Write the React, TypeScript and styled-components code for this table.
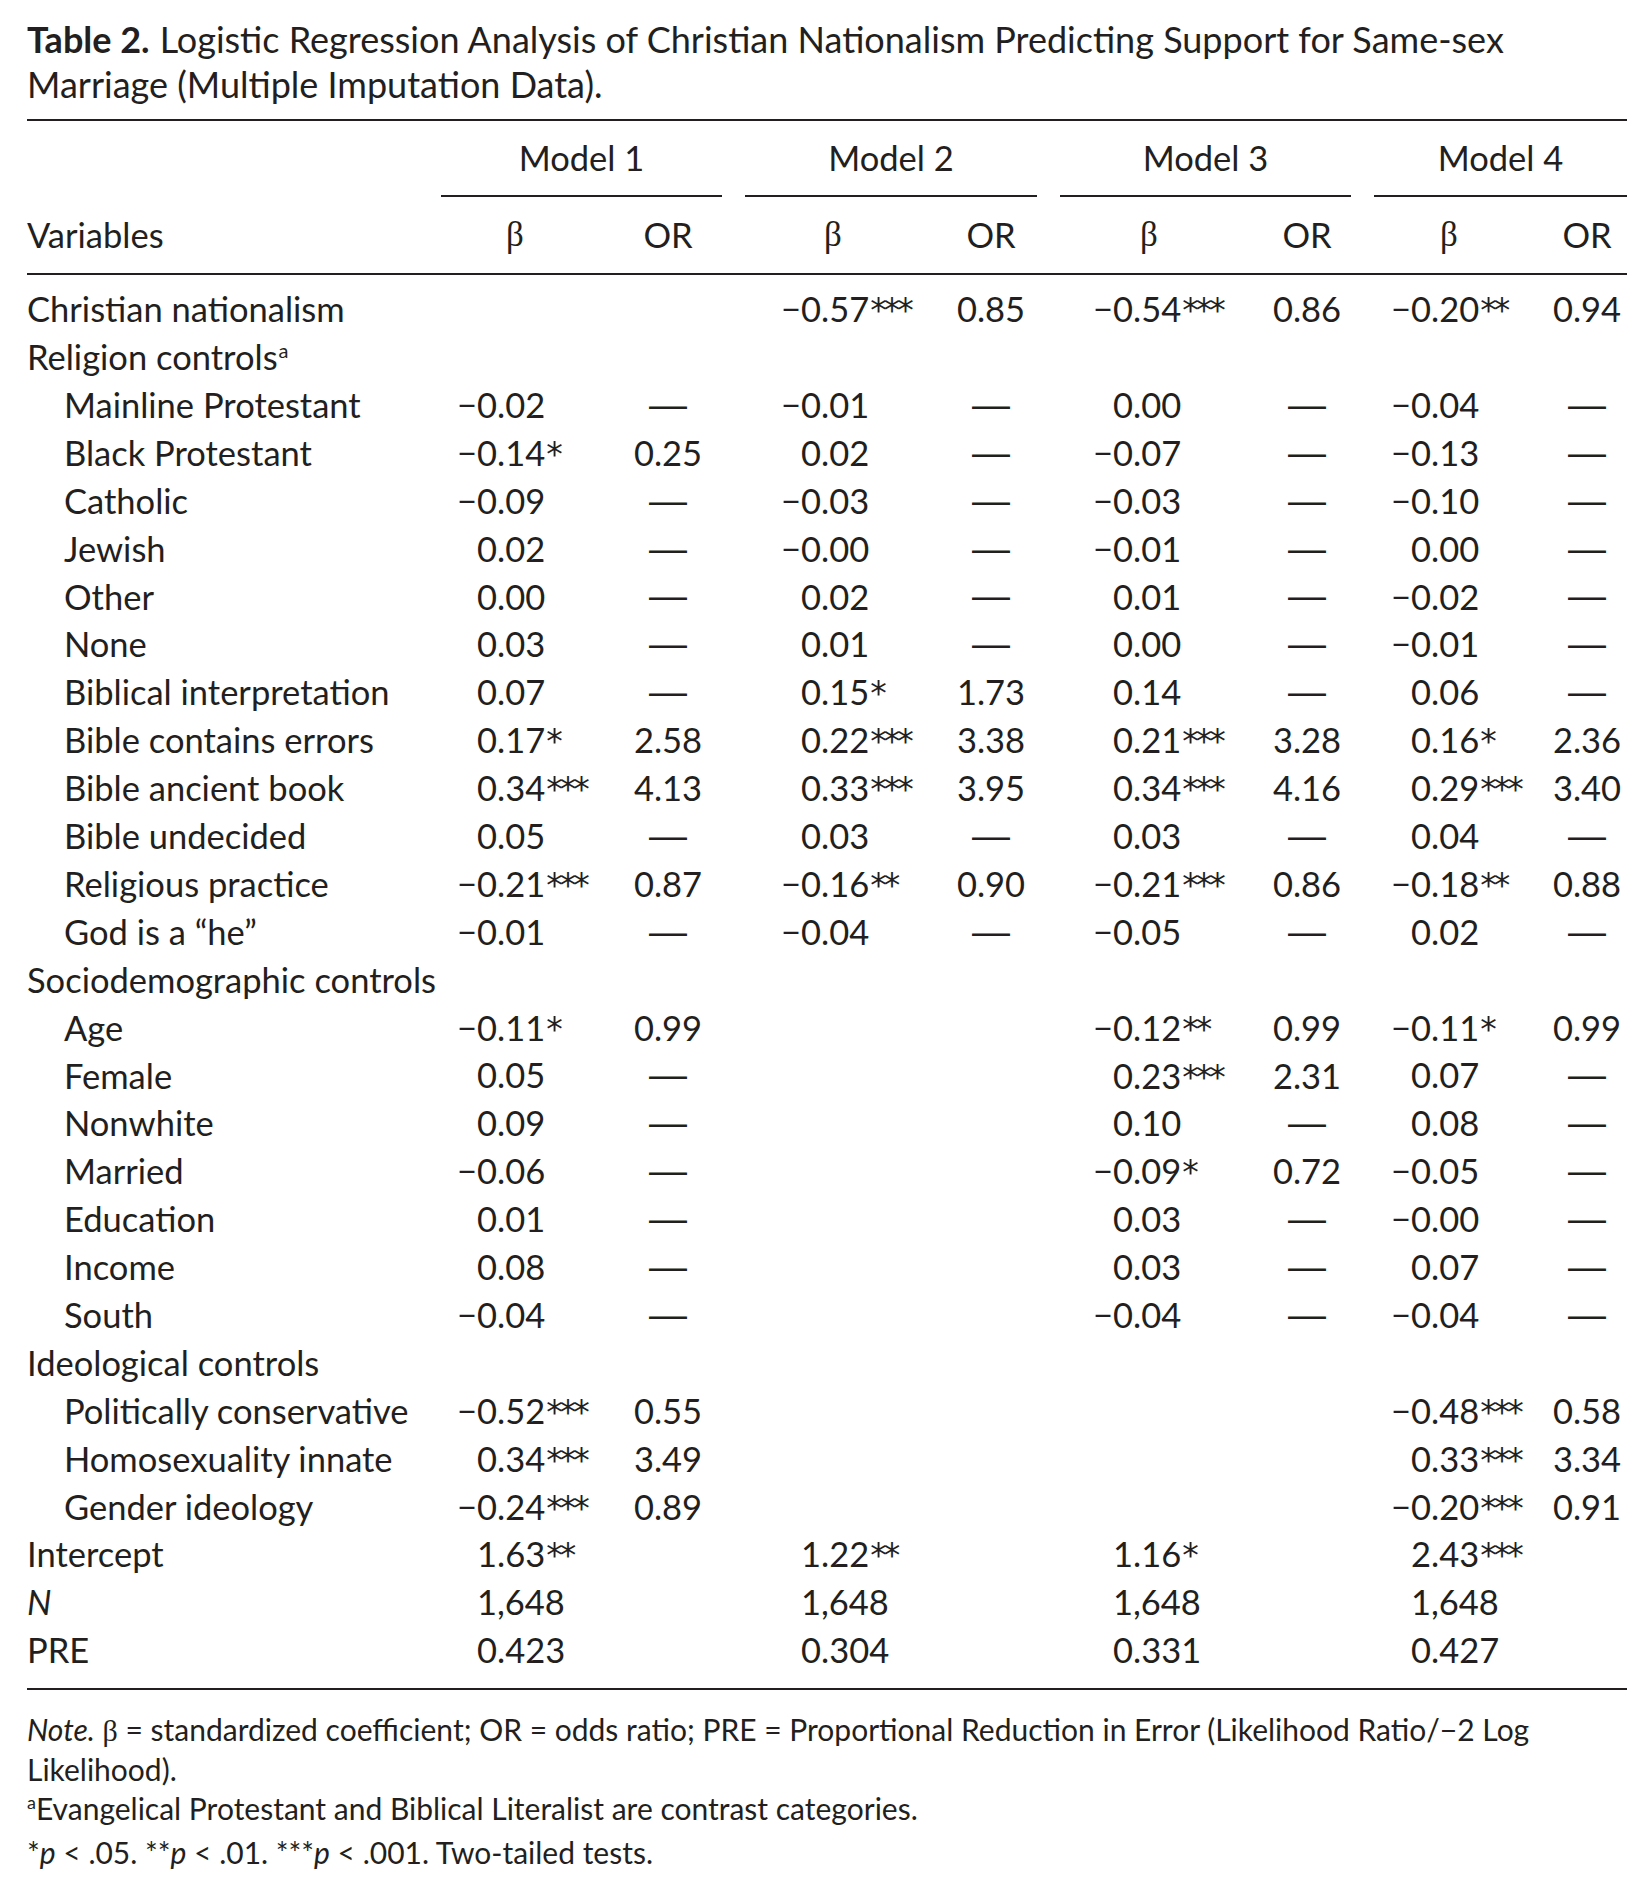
import React from 'react';
import styled, { createGlobalStyle } from 'styled-components';

const Global = createGlobalStyle`
  html, body { margin: 0; padding: 0; background: #ffffff; }
  body { font-family: Lato, "Noto Sans", sans-serif; color: #231f20; }
`;

type Model = { w: number; bw: number; ow: number; dec: number; bh: number };
const MODELS: Model[] = [
  { w: 281, bw: 173, ow: 108, dec: 56, bh: 74 },
  { w: 292, bw: 200, ow: 92, dec: 76, bh: 88 },
  { w: 291, bw: 203, ow: 88, dec: 73, bh: 89 },
  { w: 253, bw: 173, ow: 80, dec: 57, bh: 75 },
];

const COLS = `391px ${MODELS.map((m) => `${m.w}px`).join(' ')}`;

type Cell = [string, string] | null;
type RowData = {
  label: string;
  kind: 'top' | 'section' | 'sub';
  sup?: string;
  italic?: boolean;
  cells?: Cell[];
};

const D = '—';
const ROWS: RowData[] = [
  { label: 'Christian nationalism', kind: 'top', cells: [null, ['−0.57***', '0.85'], ['−0.54***', '0.86'], ['−0.20**', '0.94']] },
  { label: 'Religion controls', kind: 'section', sup: 'a' },
  { label: 'Mainline Protestant', kind: 'sub', cells: [['−0.02', D], ['−0.01', D], ['0.00', D], ['−0.04', D]] },
  { label: 'Black Protestant', kind: 'sub', cells: [['−0.14*', '0.25'], ['0.02', D], ['−0.07', D], ['−0.13', D]] },
  { label: 'Catholic', kind: 'sub', cells: [['−0.09', D], ['−0.03', D], ['−0.03', D], ['−0.10', D]] },
  { label: 'Jewish', kind: 'sub', cells: [['0.02', D], ['−0.00', D], ['−0.01', D], ['0.00', D]] },
  { label: 'Other', kind: 'sub', cells: [['0.00', D], ['0.02', D], ['0.01', D], ['−0.02', D]] },
  { label: 'None', kind: 'sub', cells: [['0.03', D], ['0.01', D], ['0.00', D], ['−0.01', D]] },
  { label: 'Biblical interpretation', kind: 'sub', cells: [['0.07', D], ['0.15*', '1.73'], ['0.14', D], ['0.06', D]] },
  { label: 'Bible contains errors', kind: 'sub', cells: [['0.17*', '2.58'], ['0.22***', '3.38'], ['0.21***', '3.28'], ['0.16*', '2.36']] },
  { label: 'Bible ancient book', kind: 'sub', cells: [['0.34***', '4.13'], ['0.33***', '3.95'], ['0.34***', '4.16'], ['0.29***', '3.40']] },
  { label: 'Bible undecided', kind: 'sub', cells: [['0.05', D], ['0.03', D], ['0.03', D], ['0.04', D]] },
  { label: 'Religious practice', kind: 'sub', cells: [['−0.21***', '0.87'], ['−0.16**', '0.90'], ['−0.21***', '0.86'], ['−0.18**', '0.88']] },
  { label: 'God is a “he”', kind: 'sub', cells: [['−0.01', D], ['−0.04', D], ['−0.05', D], ['0.02', D]] },
  { label: 'Sociodemographic controls', kind: 'section' },
  { label: 'Age', kind: 'sub', cells: [['−0.11*', '0.99'], null, ['−0.12**', '0.99'], ['−0.11*', '0.99']] },
  { label: 'Female', kind: 'sub', cells: [['0.05', D], null, ['0.23***', '2.31'], ['0.07', D]] },
  { label: 'Nonwhite', kind: 'sub', cells: [['0.09', D], null, ['0.10', D], ['0.08', D]] },
  { label: 'Married', kind: 'sub', cells: [['−0.06', D], null, ['−0.09*', '0.72'], ['−0.05', D]] },
  { label: 'Education', kind: 'sub', cells: [['0.01', D], null, ['0.03', D], ['−0.00', D]] },
  { label: 'Income', kind: 'sub', cells: [['0.08', D], null, ['0.03', D], ['0.07', D]] },
  { label: 'South', kind: 'sub', cells: [['−0.04', D], null, ['−0.04', D], ['−0.04', D]] },
  { label: 'Ideological controls', kind: 'section' },
  { label: 'Politically conservative', kind: 'sub', cells: [['−0.52***', '0.55'], null, null, ['−0.48***', '0.58']] },
  { label: 'Homosexuality innate', kind: 'sub', cells: [['0.34***', '3.49'], null, null, ['0.33***', '3.34']] },
  { label: 'Gender ideology', kind: 'sub', cells: [['−0.24***', '0.89'], null, null, ['−0.20***', '0.91']] },
  { label: 'Intercept', kind: 'top', cells: [['1.63**', ''], ['1.22**', ''], ['1.16*', ''], ['2.43***', '']] },
  { label: 'N', kind: 'top', italic: true, cells: [['1,648', ''], ['1,648', ''], ['1,648', ''], ['1,648', '']] },
  { label: 'PRE', kind: 'top', cells: [['0.423', ''], ['0.304', ''], ['0.331', ''], ['0.427', '']] },
];

const Page = styled.div`
  width: 1600px;
  padding: 17px 0 40px 27px;
`;

const Caption = styled.div`
  font-size: 36px;
  line-height: 45px;
  width: 1600px;
`;

const CaptionLabel = styled.span`
  font-weight: 700;
  margin-right: 10px;
`;

const CaptionLine = styled.div`
  white-space: nowrap;
`;

const Rule = styled.div<{ $top: number; $bottom: number }>`
  height: 2px;
  background: #231f20;
  margin-top: ${(p) => p.$top}px;
  margin-bottom: ${(p) => p.$bottom}px;
`;

const Grid = styled.div<{ $h: number }>`
  display: grid;
  grid-template-columns: ${COLS};
  column-gap: 23px;
  height: ${(p) => p.$h}px;
  align-items: center;
  font-size: 34.5px;
  line-height: 1.2;
`;

const ModelHead = styled.div`
  height: 100%;
  display: flex;
  align-items: center;
  justify-content: center;
  border-bottom: 2px solid #231f20;
  box-sizing: border-box;
`;

const SubHead = styled.div<{ $bw: number; $ow: number }>`
  display: grid;
  grid-template-columns: ${(p) => p.$bw}px ${(p) => p.$ow}px;
  align-items: center;
`;

const BetaHead = styled.span<{ $c: number }>`
  width: ${(p) => p.$c * 2}px;
  text-align: center;
  font-family: "Liberation Serif", "DejaVu Serif", serif;
  font-size: 35px;
`;

const OrHead = styled.span`
  text-align: center;
`;

const Label = styled.div<{ $indent: boolean; $italic?: boolean }>`
  padding-left: ${(p) => (p.$indent ? 37 : 0)}px;
  font-style: ${(p) => (p.$italic ? 'italic' : 'normal')};
  white-space: nowrap;
`;

const Sup = styled.span`
  font-size: 20px;
  position: relative;
  top: -12px;
  margin-left: 1px;
`;

const Pair = styled.div<{ $bw: number; $ow: number }>`
  display: grid;
  grid-template-columns: ${(p) => p.$bw}px ${(p) => p.$ow}px;
  align-items: center;
`;

const Beta = styled.div`
  display: flex;
  align-items: baseline;
  white-space: nowrap;
`;

const IntPart = styled.span<{ $w: number }>`
  width: ${(p) => p.$w}px;
  text-align: right;
  flex: none;
`;

const Stars = styled.span`
  font-family: "DejaVu Sans", sans-serif;
  font-size: 33px;
  line-height: 1;
  letter-spacing: -3px;
  margin-left: 1px;
`;

const Or = styled.div`
  text-align: center;
`;

const Dash = styled.span`
  font-family: "Liberation Sans", Arial, sans-serif;
  font-size: 38px;
  position: relative;
  top: 1px;
`;

const Body = styled.div`
  padding: 10px 0 14px;
`;

const Notes = styled.div`
  font-size: 30px;
  line-height: 39px;
  width: 1600px;
`;

const NoteLine = styled.div`
  white-space: nowrap;
`;

const Em = styled.i`
  font-style: italic;
`;

const BetaSym = styled.span`
  font-family: "Liberation Serif", "DejaVu Serif", serif;
`;

const NoteSup = styled.span`
  font-size: 18px;
  position: relative;
  top: -11px;
`;

function splitNum(v: string) {
  const m = v.match(/^([^.,]*)([.,].*?)(\**)$/);
  if (!m) return { int: v, frac: '', stars: '' };
  return { int: m[1], frac: m[2], stars: m[3] };
}

function BetaValue({ v, dec }: { v: string; dec: number }) {
  const { int, frac, stars } = splitNum(v);
  return (
    <Beta>
      <IntPart $w={dec}>{int}</IntPart>
      <span>{frac}</span>
      {stars && <Stars>{stars}</Stars>}
    </Beta>
  );
}

function TableRow({ row }: { row: RowData }) {
  return (
    <Grid $h={47.9}>
      <Label $indent={row.kind === 'sub'} $italic={row.italic}>
        {row.label}
        {row.sup && <Sup>{row.sup}</Sup>}
      </Label>
      {MODELS.map((m, i) => {
        const c = row.cells ? row.cells[i] : null;
        return (
          <Pair key={i} $bw={m.bw} $ow={m.ow}>
            {c ? <BetaValue v={c[0]} dec={m.dec} /> : <span />}
            <Or>{c ? c[1] === D ? <Dash>{D}</Dash> : c[1] : ''}</Or>
          </Pair>
        );
      })}
    </Grid>
  );
}

export default function App() {
  return (
    <Page>
      <Global />
      <Caption>
        <CaptionLine>
          <CaptionLabel>Table 2.</CaptionLabel>
          <span>Logistic Regression Analysis of Christian Nationalism Predicting Support for Same-sex</span>
        </CaptionLine>
        <CaptionLine>Marriage (Multiple Imputation Data).</CaptionLine>
      </Caption>
      <Rule $top={12} $bottom={0} />
      <Grid $h={76}>
        <span />
        {MODELS.map((m, i) => (
          <ModelHead key={i}>Model {i + 1}</ModelHead>
        ))}
      </Grid>
      <Grid $h={76}>
        <span>Variables</span>
        {MODELS.map((m, i) => (
          <SubHead key={i} $bw={m.bw} $ow={m.ow}>
            <BetaHead $c={m.bh}>β</BetaHead>
            <OrHead>OR</OrHead>
          </SubHead>
        ))}
      </Grid>
      <Rule $top={0} $bottom={0} />
      <Body>
        {ROWS.map((r, i) => (
          <TableRow key={i} row={r} />
        ))}
      </Body>
      <Rule $top={0} $bottom={20} />
      <Notes>
        <NoteLine>
          <Em>Note.</Em> <BetaSym>β</BetaSym>{' '}
          <span>= standardized coefficient; OR = odds ratio; PRE = Proportional Reduction in Error (Likelihood Ratio/−2 Log</span>
        </NoteLine>
        <NoteLine>Likelihood).</NoteLine>
        <NoteLine>
          <NoteSup>a</NoteSup>
          <span>Evangelical Protestant and Biblical Literalist are contrast categories.</span>
        </NoteLine>
        <NoteLine>
          *<Em>p</Em> &lt; .05. **<Em>p</Em> &lt; .01. ***<Em>p</Em> &lt; .001. Two-tailed tests.
        </NoteLine>
      </Notes>
    </Page>
  );
}
